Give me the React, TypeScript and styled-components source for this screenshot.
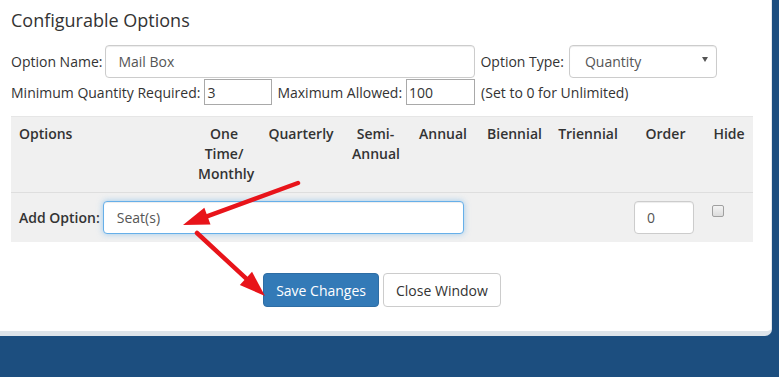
import React from "react";
import styled, { createGlobalStyle } from "styled-components";

const GlobalStyle = createGlobalStyle`
  html, body {
    margin: 0;
    padding: 0;
    background: #1c4e7f;
    font-family: "Open Sans", "Liberation Sans", sans-serif;
    font-size: 14px;
    color: #333;
  }
`;

const Page = styled.div`
  position: relative;
  width: 779px;
  height: 377px;
  overflow: hidden;
`;

const Panel = styled.div`
  width: 760px;
  height: 323px;
  padding: 8px 0 0 11px;
  background: #fff;
  border-right: 1px solid #e3e8ec;
  border-bottom: 5px solid #dde4ea;
  border-bottom-right-radius: 7px;
`;

const Title = styled.h2`
  margin: 0;
  font-size: 18px;
  font-weight: 400;
  line-height: 24px;
  color: #333;
`;

const FieldRow = styled.div<{ $top: number; $height: number }>`
  display: flex;
  align-items: center;
  margin-top: ${(p) => p.$top}px;
  height: ${(p) => p.$height}px;
  white-space: nowrap;
`;

const Label = styled.span<{ $gap?: number }>`
  margin-right: ${(p) => p.$gap ?? 4}px;
  color: #333;
`;

const Note = styled.span`
  margin-left: 1px;
`;

const TextBox = styled.div<{ $width: number; $focus?: boolean }>`
  box-sizing: border-box;
  display: flex;
  align-items: center;
  width: ${(p) => p.$width}px;
  height: 33px;
  padding: 0 12px;
  background: #fff;
  border: 1px solid ${(p) => (p.$focus ? "#66afe9" : "#ccc")};
  border-radius: 4px;
  box-shadow: ${(p) =>
    p.$focus
      ? "inset 0 1px 1px rgba(0,0,0,.075), 0 0 6px rgba(102,175,233,.6)"
      : "inset 0 1px 1px rgba(0,0,0,.075)"};
  color: #555;
`;

const PlainBox = styled.div<{ $width: number }>`
  box-sizing: border-box;
  display: flex;
  align-items: center;
  width: ${(p) => p.$width}px;
  height: 26px;
  padding: 0 2px;
  margin-right: 5px;
  border: 1px solid #a9a9a9;
  background: #fff;
  color: #333;
`;

const Select = styled(TextBox)`
  justify-content: space-between;
  padding: 0 8px 0 15px;
  margin-top: -1px;
  &::after {
    content: "";
    border-left: 3px solid transparent;
    border-right: 3px solid transparent;
    border-top: 5px solid #555;
    margin-top: -4px;
  }
`;

const Grid = styled.div`
  display: grid;
  grid-template-columns: 179px 68px 86px 63px 72px 71px 76px 79px 48px;
  width: 742px;
  margin-top: 11px;
  background: #f0f0f0;
  border-top: 1px solid #e6e6e6;
`;

const Head = styled.div<{ $left?: boolean }>`
  padding: 7px 8px 8px;
  font-weight: 600;
  line-height: 20px;
  text-align: ${(p) => (p.$left ? "left" : "center")};
  border-bottom: 1px solid #dedede;
  color: #333;
`;

const Cell = styled.div<{ $span?: number }>`
  grid-column: span ${(p) => p.$span ?? 1};
  display: flex;
  align-items: flex-start;
  padding: 8px;
`;

const BoldLabel = styled.span`
  font-weight: 600;
  margin-right: 3px;
  align-self: center;
`;

const Check = styled.div`
  box-sizing: border-box;
  width: 12px;
  height: 12px;
  margin: 4px 0 0 -1px;
  border: 1px solid #a0a0a0;
  border-radius: 2px;
  background: linear-gradient(#f4f4f4, #dcdcdc);
`;

const Actions = styled.div`
  display: flex;
  justify-content: center;
  gap: 4px;
  margin: 31px 0 0 -18px;
`;

const Button = styled.div<{ $primary?: boolean }>`
  box-sizing: border-box;
  height: 34px;
  padding: 0 12px;
  display: flex;
  align-items: center;
  border-radius: 4px;
  border: 1px solid ${(p) => (p.$primary ? "#2e6da4" : "#ccc")};
  background: ${(p) => (p.$primary ? "#337ab7" : "#fff")};
  color: ${(p) => (p.$primary ? "#fff" : "#333")};
`;

const Overlay = styled.svg`
  position: absolute;
  left: 0;
  top: 0;
  pointer-events: none;
`;

function Arrow({ x1, y1, x2, y2 }: { x1: number; y1: number; x2: number; y2: number }) {
  const dx = x2 - x1;
  const dy = y2 - y1;
  const len = Math.hypot(dx, dy);
  const ux = dx / len;
  const uy = dy / len;
  const headLen = 26;
  const headW = 9;
  const bx = x2 - ux * headLen;
  const by = y2 - uy * headLen;
  const pts = [
    `${x2},${y2}`,
    `${bx - uy * headW},${by + ux * headW}`,
    `${bx + uy * headW},${by - ux * headW}`,
  ].join(" ");
  return (
    <g>
      <line x1={x1} y1={y1} x2={bx + ux * 2} y2={by + uy * 2} stroke="#e8141a" strokeWidth={4.5} strokeLinecap="round" />
      <polygon points={pts} fill="#e8141a" />
    </g>
  );
}

const headers = ["One Time/ Monthly", "Quarterly", "Semi- Annual", "Annual", "Biennial", "Triennial", "Order", "Hide"];

export default function App() {
  return (
    <Page>
      <GlobalStyle />
      <Panel>
        <Title>Configurable Options</Title>
        <FieldRow $top={13} $height={33}>
          <Label $gap={3}>Option Name:</Label>
          <TextBox $width={370}>Mail Box</TextBox>
          <Label $gap={5} style={{ marginLeft: 5 }}>Option Type:</Label>
          <Select $width={148}>Quantity</Select>
        </FieldRow>
        <FieldRow $top={1} $height={26}>
          <Label>Minimum Quantity Required:</Label>
          <PlainBox $width={68}>3</PlainBox>
          <Label>Maximum Allowed:</Label>
          <PlainBox $width={69}>100</PlainBox>
          <Note>(Set to 0 for Unlimited)</Note>
        </FieldRow>
        <Grid>
          <Head $left>Options</Head>
          {headers.map((h) => (
            <Head key={h}>{h}</Head>
          ))}
          <Cell $span={7}>
            <BoldLabel>Add Option:</BoldLabel>
            <TextBox $width={361} $focus style={{ paddingLeft: 13 }}>Seat(s)</TextBox>
          </Cell>
          <Cell>
            <TextBox $width={60}>0</TextBox>
          </Cell>
          <Cell>
            <Check />
          </Cell>
        </Grid>
        <Actions>
          <Button $primary>Save Changes</Button>
          <Button>Close Window</Button>
        </Actions>
      </Panel>
      <Overlay width={779} height={377}>
        <Arrow x1={298} y1={183} x2={183} y2={225} />
        <Arrow x1={197} y1={233} x2={265} y2={296} />
      </Overlay>
    </Page>
  );
}
